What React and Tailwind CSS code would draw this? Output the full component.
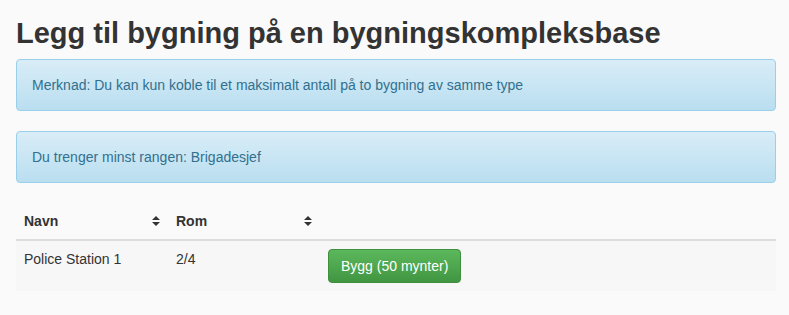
import React from 'react';

const SortIcon = () => (
  <svg width="8" height="10" viewBox="0 0 8 10" className="inline-block">
    <path d="M0 4 L4 0 L8 4 Z" fill="#333" />
    <path d="M0 6 L4 10 L8 6 Z" fill="#333" />
  </svg>
);

const App = () => {
  const rows = [{ name: 'Police Station 1', rooms: '2/4' }];

  return (
    <div className="min-h-screen bg-[#fafafa] pl-[16px] pr-[13px] pb-4 text-[14px] text-[#333]" style={{ fontFamily: '"Liberation Sans", Arial, sans-serif' }}>
      {/* Title */}
      <h1 className="pt-[17px] mb-[9px] text-[29px] leading-[33px] font-bold text-[#333]">
        Legg til bygning på en bygningskompleksbase
      </h1>

      {/* Alerts */}
      <div className="mb-[20px] rounded-[4px] border border-[#9acfea] bg-gradient-to-b from-[#d9edf7] to-[#b9def0] px-[15px] py-[15px] leading-[20px] text-[#31708f]">
        Merknad: Du kan kun koble til et maksimalt antall på to bygning av samme type
      </div>
      <div className="mb-[20px] rounded-[4px] border border-[#9acfea] bg-gradient-to-b from-[#d9edf7] to-[#b9def0] px-[15px] py-[15px] leading-[20px] text-[#31708f]">
        Du trenger minst rangen: Brigadesjef
      </div>

      {/* Table */}
      <table className="w-full border-collapse leading-[20px]">
        <thead>
          <tr className="border-b-2 border-[#ddd]">
            <th className="w-[152px] p-[8px] text-left font-bold">
              <div className="flex items-center justify-between">
                <span>Navn</span>
                <SortIcon />
              </div>
            </th>
            <th className="w-[152px] p-[8px] text-left font-bold">
              <div className="flex items-center justify-between">
                <span>Rom</span>
                <SortIcon />
              </div>
            </th>
            <th className="p-[8px]"></th>
          </tr>
        </thead>
        <tbody>
          {rows.map((r) => (
            <tr key={r.name} className="bg-[#f7f7f7]">
              <td className="p-[8px] align-top">{r.name}</td>
              <td className="p-[8px] align-top">{r.rooms}</td>
              <td className="p-[8px] align-top">
                <button className="rounded-[4px] border border-[#3e8f3e] bg-gradient-to-b from-[#5cb85c] to-[#419641] px-[12px] py-[6px] leading-[20px] text-white">
                  Bygg (50 mynter)
                </button>
              </td>
            </tr>
          ))}
        </tbody>
      </table>
    </div>
  );
};

export default App;
